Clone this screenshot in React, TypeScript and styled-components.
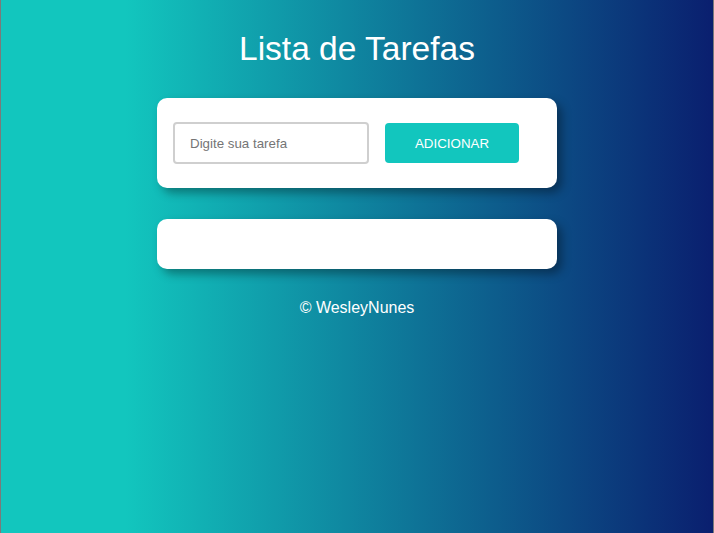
import React, { useState } from "react";
import styled, { createGlobalStyle } from "styled-components";

const GlobalStyle = createGlobalStyle`
  html, body { margin: 0; padding: 0; height: 100%; }
  body { font-family: "Liberation Sans", Arial, sans-serif; }
  #root { height: 100%; }
`;

const Page = styled.div`
  box-sizing: border-box;
  min-height: 533px;
  height: 100%;
  border-left: 1px solid #7a7a7a;
  border-right: 1px solid #7a7a7a;
  background: linear-gradient(to right, #12c6be 17.5%, #0a1f6f 100%);
  display: flex;
  flex-direction: column;
  align-items: center;
  padding-top: 30px;
`;

const Title = styled.h1`
  margin: 0 0 31px;
  font-size: 33.5px;
  font-weight: 400;
  line-height: 37px;
  color: #ffffff;
`;

const Card = styled.div<{ $height: number }>`
  box-sizing: border-box;
  width: 400px;
  height: ${(p) => p.$height}px;
  background: #ffffff;
  border-radius: 10px;
  box-shadow: 5px 5px 10px rgba(0, 0, 0, 0.35);
  margin-bottom: 31px;
  display: flex;
  align-items: center;
  padding: 0 16px;
  gap: 16px;
`;

const Input = styled.input`
  box-sizing: border-box;
  width: 196px;
  height: 42px;
  border: 2px solid #cfcfcf;
  border-radius: 4px;
  padding: 0 15px;
  font-family: "Liberation Sans", Arial, sans-serif;
  font-size: 13.33px;
  color: #333;
  outline: none;
  &::placeholder { color: #757575; }
`;

const Button = styled.button`
  box-sizing: border-box;
  width: 134px;
  height: 40px;
  border: none;
  border-radius: 4px;
  background: #12c6be;
  color: #ffffff;
  font-family: "Liberation Sans", Arial, sans-serif;
  font-size: 13.33px;
  cursor: pointer;
`;

const Footer = styled.p`
  margin: -1px 0 0;
  font-size: 16px;
  line-height: 18px;
  color: #ffffff;
`;

export default function App() {
  const [value, setValue] = useState("");
  return (
    <>
      <GlobalStyle />
      <Page>
        <Title>Lista de Tarefas</Title>
        <Card $height={90}>
          <Input
            placeholder="Digite sua tarefa"
            value={value}
            onChange={(e) => setValue(e.target.value)}
          />
          <Button>ADICIONAR</Button>
        </Card>
        <Card $height={50} />
        <Footer>© WesleyNunes</Footer>
      </Page>
    </>
  );
}
